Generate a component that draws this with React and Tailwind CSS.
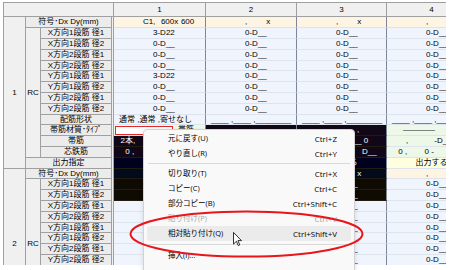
import React from 'react';

const ROWS = [
  { label: '符号･Dx Dy(mm)', type: 'sign', span: true },
  { label: 'X方向1段筋 径1', type: 'bar' },
  { label: 'X方向1段筋 径2', type: 'bar' },
  { label: 'X方向2段筋 径1', type: 'bar' },
  { label: 'X方向2段筋 径2', type: 'bar' },
  { label: 'Y方向1段筋 径1', type: 'bar' },
  { label: 'Y方向1段筋 径2', type: 'bar' },
  { label: 'Y方向2段筋 径1', type: 'bar' },
  { label: 'Y方向2段筋 径2', type: 'bar' },
  { label: '配筋形状', type: 'bar' },
  { label: '帯筋材質･ﾀｲﾌﾟ', type: 'green' },
  { label: '帯筋', type: 'green' },
  { label: '芯鉄筋', type: 'green' },
  { label: '出力指定', type: 'yellow', span: true },
];

const BG = {
  sign: 'bg-[#fdf4e3]',
  bar: 'bg-[#f0f4fc]',
  green: 'bg-[#eef8e8]',
  yellow: 'bg-[#ffffe0]',
};
const INV = {
  sign: 'bg-[#020b1c]',
  bar: 'bg-[#0f0b03]',
  green: 'bg-[#110717]',
  yellow: 'bg-[#00001f]',
};

const MENU = [
  { l: '元に戻す(U)', s: 'Ctrl+Z' },
  { l: 'やり直し(R)', s: 'Ctrl+Y' },
  { sep: 'h-[5px]' },
  { l: '切り取り(T)', s: 'Ctrl+X' },
  { l: 'コピー(C)', s: 'Ctrl+C' },
  { l: '部分コピー(B)', s: 'Ctrl+Shift+C' },
  { l: '貼り付け(P)', s: 'Ctrl+V', dis: true },
  { l: '相対貼り付け(Q)', s: 'Ctrl+Shift+V', hi: true },
  { sep: 'h-[7px]' },
  { l: '挿入(I)...', s: '' },
];

function isSel(b, r, c) {
  if (c > 2) return false;
  if (b === 0 && r >= 10) return !(r === 10 && c === 0);
  if (b === 1 && r <= 2) return true;
  return false;
}

function SignText({ name, dx, dy }) {
  return (
    <div className="flex pl-[29px]">
      <span className="w-[10px]">{name}</span>
      <span>,</span>
      <span className="w-[19px] text-right">{dx}</span>
      <span>x</span>
      <span className="w-[16px] text-right">{dy}</span>
    </div>
  );
}

function Content({ b, r, c }) {
  const first = b === 0 && c === 0;
  if (r === 0) return <SignText name={first ? 'C1' : ''} dx={first ? '600' : ''} dy={first ? '600' : ''} />;
  if (r >= 1 && r <= 8)
    return <span className="pl-[39px]">{first && (r === 1 || r === 5) ? '3-D22' : '0-D__'}</span>;
  if (r === 9)
    return <span className="pl-[5px]">{first ? '通常 ,通常 ,寄せなし' : '____ ,____ ,________'}</span>;
  if (r === 10)
    return (
      <div className="flex">
        <span className="ml-[16px]">――――</span>
        <span className="ml-[12px]">,</span>
      </div>
    );
  if (r === 11)
    return (
      <div className="flex">
        <span className="w-[19px] text-right">{first ? '2本' : ''}</span>
        <span>,</span>
        <span className="w-[26px]"></span>
        <span>{first ? '-D13 100' : '-D__ 0'}</span>
      </div>
    );
  if (r === 12)
    return (
      <div className="flex">
        <span className="w-[18px] text-right">0 </span>
        <span>,</span>
        <span className="w-[24px] text-right">0 </span>
        <span>-</span>
        <span className="w-[18px]"></span>
        <span>D__</span>
      </div>
    );
  return <span className="w-full text-center">出力する</span>;
}

function DataCell({ b, r, c }) {
  const type = ROWS[r].type;
  const base =
    'relative flex items-center overflow-hidden whitespace-pre leading-none border-r border-b border-r-[#7d8597]';
  if (b === 0 && r === 10 && c === 0) {
    return (
      <div className={`${base} border-b-[#dde4ee] bg-[#eef8e8] text-black`}>
        <div className="absolute left-[1px] top-[1px] w-[58px] h-[9px] border border-[#e02828] bg-white" />
        <span className="pl-[64px]">帯筋</span>
      </div>
    );
  }
  const sel = isSel(b, r, c);
  const cls = sel
    ? `${base} border-b-[#221b11] ${INV[type]} text-white`
    : `${base} border-b-[#dde4ee] ${BG[type]} text-black`;
  return (
    <div className={cls}>
      <Content b={b} r={r} c={c} />
    </div>
  );
}

function LabelCell({ text, span }) {
  return (
    <div
      className={
        span
          ? 'col-span-2 bg-[#f0f0f0] border-r border-[#a0a0a0] pr-[1px]'
          : 'bg-[#f0f0f0] border-r border-[#a0a0a0] pr-[1px]'
      }
    >
      <div className="h-full bg-[#ececec] border-r border-b border-[#a0a0a0] flex items-center justify-center leading-none whitespace-nowrap">
        {text}
      </div>
    </div>
  );
}

export default function App() {
  const cells = [];
  cells.push(<div key="h0" className="col-span-3 bg-[#f0f0f0] border-r border-b border-[#a0a0a0]" />);
  ['1', '2', '3', '4'].forEach((t) =>
    cells.push(
      <div
        key={'h' + t}
        className="bg-[#f0f0f0] border-r border-b border-[#a0a0a0] flex items-center justify-center leading-none"
      >
        {t}
      </div>
    )
  );
  [0, 1].forEach((b) => {
    ROWS.forEach((row, r) => {
      if (r === 0)
        cells.push(
          <div
            key={'n' + b}
            className="row-span-14 bg-[#f0f0f0] border-r border-b border-[#a0a0a0] flex items-center justify-center leading-none"
          >
            {b + 1}
          </div>
        );
      if (r === 1)
        cells.push(
          <div
            key={'rc' + b}
            className="row-span-12 bg-[#f0f0f0] border-r border-b border-[#a0a0a0] flex items-center justify-center leading-none"
          >
            RC
          </div>
        );
      cells.push(<LabelCell key={'l' + b + '-' + r} text={row.label} span={row.span} />);
      for (let c = 0; c < 4; c++) cells.push(<DataCell key={'d' + b + '-' + r + '-' + c} b={b} r={r} c={c} />);
    });
  });

  return (
    <div className="relative w-[450px] h-[270px] overflow-hidden bg-white pt-[2px] pl-[3px] text-[8px] text-black [font-family:'Liberation_Sans','Noto_Sans_CJK_JP',sans-serif]">
      <div className="w-[443px] h-[263px] overflow-hidden border-l border-t border-[#a0a0a0]">
        <div className="grid w-[473px] grid-cols-[22px_15px_73px_92px_91px_90px_90px] grid-rows-[14px_11px_11px_11px_11px_10px_11px_11px_11px_11px_10px_11px_11px_11px_11px_10px_11px_11px_11px_11px_10px_11px_11px_11px_11px_10px_11px_11px_11px]">
          {cells}
        </div>
      </div>

      <div className="absolute left-[143px] top-[129px] w-[212px] h-[150px] bg-[#f9f9f9] border border-[#d2d2d2] rounded-[4px] shadow-[0_2px_5px_rgba(0,0,0,0.12)] pt-[1px] [font-family:'Open_Sans','Noto_Sans_CJK_JP',sans-serif]">
        {MENU.map((m, i) =>
          m.sep ? (
            <div key={i} className={`${m.sep} flex items-center`}>
              <div className="h-px w-full mx-[4px] bg-[#d9d9d9]" />
            </div>
          ) : (
            <div
              key={i}
              className={`flex items-center justify-between h-[15px] mx-[3px] pl-[21px] pr-[14px] rounded-[3px] leading-none whitespace-nowrap ${
                m.hi ? 'bg-[#ebebeb]' : ''
              } ${m.dis ? 'text-[#a6a6a6]' : 'text-black'}`}
            >
              <span className="text-[7.5px]">{m.l}</span>
              <span className="text-[8px]">{m.s}</span>
            </div>
          )
        )}
      </div>

      <svg className="absolute left-0 top-0 w-[450px] h-[270px] pointer-events-none" viewBox="0 0 450 270">
        <ellipse cx="246.5" cy="234" rx="116" ry="22.5" fill="none" stroke="#e8151b" strokeWidth="2" />
      </svg>
      <svg className="absolute left-[233px] top-[232px] w-[9px] h-[14px]" viewBox="0 0 12 19">
        <path
          d="M0.6 0.6 L0.6 16.4 L4.5 12.6 L7 18.4 L9 17.5 L6.6 11.7 L11.4 11.7 Z"
          fill="white"
          stroke="black"
          strokeWidth="1.1"
          strokeLinejoin="round"
        />
      </svg>
    </div>
  );
}
